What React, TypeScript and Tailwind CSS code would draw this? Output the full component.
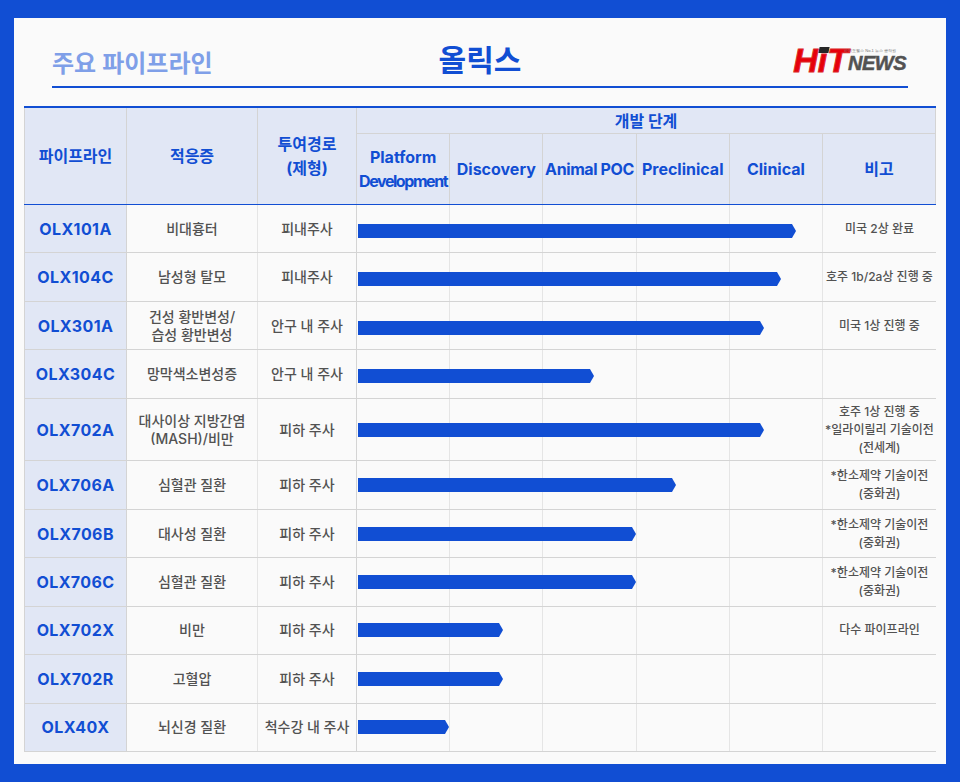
const cols = 'grid grid-cols-[103px_131px_99px_1fr_1fr_1fr_1fr_1fr_113px]';

type Row = {
  code: string;
  name: string[];
  route: string;
  tip: number;
  note: string[];
  tall?: boolean;
  low?: boolean;
};

const rows: Row[] = [
  { code: 'OLX101A', name: ['비대흉터'], route: '피내주사', tip: 438, note: ['미국 2상 완료'], low: true },
  { code: 'OLX104C', name: ['남성형 탈모'], route: '피내주사', tip: 423, note: ['호주 1b/2a상 진행 중'], low: true },
  { code: 'OLX301A', name: ['건성 황반변성/', '습성 황반변성'], route: '안구 내 주사', tip: 406, note: ['미국 1상 진행 중'], low: true },
  { code: 'OLX304C', name: ['망막색소변성증'], route: '안구 내 주사', tip: 236, note: [], low: true },
  { code: 'OLX702A', name: ['대사이상 지방간염', '(MASH)/비만'], route: '피하 주사', tip: 406, note: ['호주 1상 진행 중', '*일라이릴리 기술이전', '(전세계)'], tall: true },
  { code: 'OLX706A', name: ['심혈관 질환'], route: '피하 주사', tip: 318, note: ['*한소제약 기술이전', '(중화권)'] },
  { code: 'OLX706B', name: ['대사성 질환'], route: '피하 주사', tip: 278, note: ['*한소제약 기술이전', '(중화권)'] },
  { code: 'OLX706C', name: ['심혈관 질환'], route: '피하 주사', tip: 278, note: ['*한소제약 기술이전', '(중화권)'] },
  { code: 'OLX702X', name: ['비만'], route: '피하 주사', tip: 145, note: ['다수 파이프라인'] },
  { code: 'OLX702R', name: ['고혈압'], route: '피하 주사', tip: 145, note: [] },
  { code: 'OLX40X', name: ['뇌신경 질환'], route: '척수강 내 주사', tip: 91, note: [] },
];

function Logo() {
  return (
    <div className="relative mr-0.5 flex -translate-y-0.5 items-end justify-self-end font-['Liberation_Sans',sans-serif] italic font-bold leading-none">
      <span className="text-[34px] text-red-600 [-webkit-text-stroke:1px_#dc2626]">
        HiT
      </span>
      <span className="text-xl tracking-tight text-neutral-600 [-webkit-text-stroke:0.5px_#525252]">
        NEWS
      </span>
      <span className="absolute left-6.5 top-1 h-1.5 w-2.5 -skew-x-12 bg-neutral-800" />
      <span className="absolute right-2.5 top-1.5 text-[4px] not-italic font-normal text-neutral-500">
        바이오헬스 No.1 뉴스 공작원
      </span>
    </div>
  );
}

function Bar({ tip, low }: { tip: number; low?: boolean }) {
  return (
    <div className={low ? 'absolute inset-0 flex items-center pl-px pt-1' : 'absolute inset-0 flex items-center pl-px'}>
      <div className="flex h-3.5" style={{ width: tip }}>
        <div className="flex-1 bg-[#114ed3]" />
        <svg viewBox="0 0 6 14" className="h-3.5 w-1.5 fill-[#114ed3]">
          <path d="M0 0 L2 0 L6 7 L2 14 L0 14 Z" />
        </svg>
      </div>
    </div>
  );
}

export default function App() {
  return (
    <div className="h-screen bg-[#114ed3] px-3.5 py-4.5 font-['Inter','Noto_Sans_CJK_KR',sans-serif]">
      <div className="flex h-full flex-col bg-neutral-50 px-2.5 pt-6 pb-3">
        <header className="mx-7 mb-4.5 grid h-11.5 grid-cols-3 items-center border-b-2 border-[#114ed3] pb-1">
          <h2 className="mt-1 text-2xl font-semibold text-[#7f9fe8]">주요 파이프라인</h2>
          <h1 className="-mt-1 text-center text-3xl font-semibold text-[#114ed3]">올릭스</h1>
          <Logo />
        </header>

        <div className="flex flex-1 flex-col border-t-2 border-[#114ed3]">
          <div className={`${cols} h-24.25 grid-rows-[auto_1fr] border-b border-[#114ed3] bg-[#e1e7f5] text-center font-bold text-[#114ed3]`}>
            <div className="row-span-2 flex items-center justify-center border-x border-neutral-300">파이프라인</div>
            <div className="row-span-2 flex items-center justify-center border-r border-neutral-300">적응증</div>
            <div className="row-span-2 flex items-center justify-center border-r border-neutral-300">
              투여경로
              <br />
              (제형)
            </div>
            <div className="col-span-6 flex h-6.5 items-center justify-center border-r border-b border-neutral-300">개발 단계</div>
            <div className="flex flex-col items-center justify-center border-r border-neutral-300 leading-6">
              <span>Platform</span>
              <span className="tracking-[-0.09em]">Development</span>
            </div>
            <div className="flex items-center justify-center border-r border-neutral-300">Discovery</div>
            <div className="flex items-center justify-center border-r border-neutral-300 tracking-tight whitespace-nowrap">Animal POC</div>
            <div className="flex items-center justify-center border-r border-neutral-300">Preclinical</div>
            <div className="flex items-center justify-center border-r border-neutral-300">Clinical</div>
            <div className="flex items-center justify-center border-r border-neutral-300">비고</div>
          </div>

          {rows.map((row) => (
            <div
              key={row.code}
              className={`${cols} ${row.tall ? 'flex-[1.3]' : 'flex-1'} border-b border-neutral-300 text-center text-sm text-neutral-600`}
            >
              <div className="flex items-center justify-center border-x border-neutral-300 bg-[#e1e7f5] text-base font-bold tracking-wide text-[#114ed3]">
                {row.code}
              </div>
              <div className="flex flex-col items-center justify-center border-r border-neutral-200 leading-4.5 font-medium">
                {row.name.map((line) => (
                  <span key={line}>{line}</span>
                ))}
              </div>
              <div className="flex items-center justify-center border-r border-neutral-300 font-medium whitespace-nowrap">
                {row.route}
              </div>
              <div className="relative col-span-5 grid grid-cols-5">
                <div className="border-r border-neutral-200" />
                <div className="border-r border-neutral-200" />
                <div className="border-r border-neutral-200" />
                <div className="border-r border-neutral-200" />
                <div className="border-r border-neutral-200" />
                <Bar tip={row.tip} low={row.low} />
              </div>
              <div className="flex flex-col items-center justify-center text-xs leading-4.5 font-medium whitespace-nowrap">
                {row.note.map((line) => (
                  <span key={line}>{line}</span>
                ))}
              </div>
            </div>
          ))}
        </div>
      </div>
    </div>
  );
}
